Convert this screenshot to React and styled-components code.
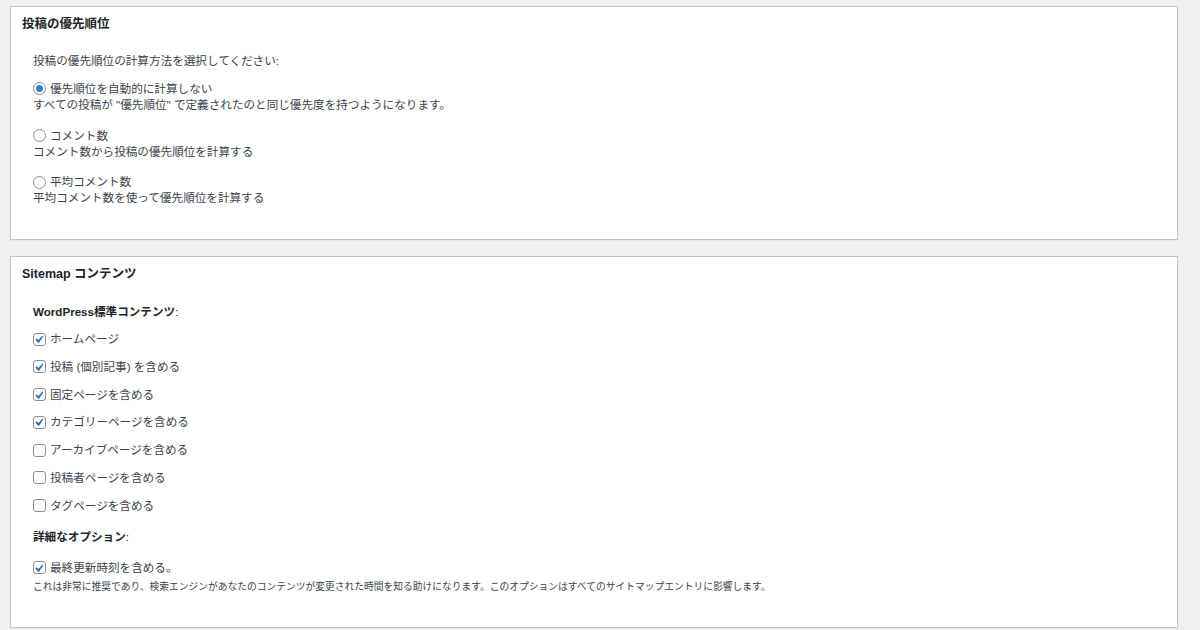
import React from "react";
import styled, { createGlobalStyle } from "styled-components";

const GlobalStyle = createGlobalStyle`
  html, body { margin: 0; padding: 0; background: #f0f0f1; }
  body {
    font-family: "Liberation Sans", "Noto Sans CJK JP", sans-serif;
    color: #3c434a;
  }
`;

const Page = styled.div`
  box-sizing: border-box;
  height: 630px;
  overflow: hidden;
  padding: 6px 22px 0 10px;
  display: flex;
  flex-direction: column;
  gap: 16px;
`;

const Panel = styled.section`
  background: #fff;
  border: 1px solid #c3c4c7;
  box-shadow: 0 1px 1px rgba(0, 0, 0, 0.04);
  padding-bottom: 33px;
  flex-shrink: 0;
`;

const PanelTitle = styled.h2`
  margin: 0;
  padding: 7px 11px 5px;
  height: 20px;
  font-size: 12.5px;
  line-height: 20px;
  font-weight: 700;
  color: #1d2327;
`;

const Body = styled.div`
  padding: ${(p) => p.$top}px 11px 0 22px;
  display: flex;
  flex-direction: column;
`;

const Text = styled.p`
  margin: ${(p) => p.$mt || 0}px 0 0;
  height: 17px;
  font-size: 11.6px;
  line-height: 17px;
`;

const Heading = styled.p`
  margin: ${(p) => p.$mt || 0}px 0 0;
  height: 17px;
  font-size: 11.6px;
  line-height: 17px;
  color: #1d2327;
  strong { font-weight: 700; }
`;

const Option = styled.div`
  margin-top: ${(p) => p.$mt}px;
  display: flex;
  flex-direction: column;
`;

const Row = styled.label`
  display: flex;
  align-items: center;
  gap: 4px;
  height: 16px;
  margin-top: ${(p) => p.$mt || 0}px;
  font-size: 11.6px;
  line-height: 16px;
`;

const Desc = styled.div`
  height: 16px;
  font-size: 11.6px;
  line-height: 16px;
`;

const Small = styled.p`
  margin: 4px 0 0;
  height: 14px;
  font-size: 9.75px;
  line-height: 14px;
`;

const RadioCircle = styled.span`
  box-sizing: border-box;
  width: 13px;
  height: 13px;
  border-radius: 50%;
  border: 1px solid #8c8f94;
  display: inline-flex;
  align-items: center;
  justify-content: center;
  flex-shrink: 0;
  background: #fff;
  &::after {
    content: "";
    width: 7px;
    height: 7px;
    border-radius: 50%;
    background: ${(p) => (p.$checked ? "#3582c4" : "transparent")};
  }
`;

const CheckBoxSquare = styled.span`
  box-sizing: border-box;
  width: 13px;
  height: 13px;
  border-radius: 3px;
  border: 1px solid #8c8f94;
  background: #fff;
  display: inline-flex;
  align-items: center;
  justify-content: center;
  flex-shrink: 0;
  overflow: visible;
  svg { display: block; }
`;

const Radio = ({ checked, children, mt }) => (
  <Row $mt={mt}>
    <RadioCircle $checked={checked} />
    <span>{children}</span>
  </Row>
);

const Check = ({ checked, children, mt }) => (
  <Row $mt={mt}>
    <CheckBoxSquare>
      {checked && (
        <svg width="16" height="16" viewBox="4 2.5 14 14">
          <path
            d="M14.83 4.89l1.34.94-5.81 8.38H9.02L5.78 9.67l1.34-1.25 2.57 2.4z"
            fill="#2271b1"
          />
        </svg>
      )}
    </CheckBoxSquare>
    <span>{children}</span>
  </Row>
);

const contents = [
  ["ホームページ", true],
  ["投稿 (個別記事) を含める", true],
  ["固定ページを含める", true],
  ["カテゴリーページを含める", true],
  ["アーカイブページを含める", false],
  ["投稿者ページを含める", false],
  ["タグページを含める", false],
];

export default function App() {
  return (
    <>
      <GlobalStyle />
      <Page>
        <Panel>
          <PanelTitle>投稿の優先順位</PanelTitle>
          <Body $top={13}>
            <Text>投稿の優先順位の計算方法を選択してください:</Text>
            <Option $mt={11.5}>
              <Radio checked>優先順位を自動的に計算しない</Radio>
              <Desc>すべての投稿が "優先順位" で定義されたのと同じ優先度を持つようになります。</Desc>
            </Option>
            <Option $mt={15}>
              <Radio>コメント数</Radio>
              <Desc>コメント数から投稿の優先順位を計算する</Desc>
            </Option>
            <Option $mt={14.5}>
              <Radio>平均コメント数</Radio>
              <Desc>平均コメント数を使って優先順位を計算する</Desc>
            </Option>
          </Body>
        </Panel>
        <Panel>
          <PanelTitle>Sitemap コンテンツ</PanelTitle>
          <Body $top={14}>
            <Heading>
              <strong>WordPress標準コンテンツ</strong>:
            </Heading>
            {contents.map(([label, checked], i) => (
              <Check key={label} checked={checked} mt={i === 0 ? 11 : 11.8}>
                {label}
              </Check>
            ))}
            <Heading $mt={14.5}>
              <strong>詳細なオプション</strong>:
            </Heading>
            <Check checked mt={14.5}>最終更新時刻を含める。</Check>
            <Small>
              これは非常に推奨であり、検索エンジンがあなたのコンテンツが変更された時間を知る助けになります。このオプションはすべてのサイトマップエントリに影響します。
            </Small>
          </Body>
        </Panel>
      </Page>
    </>
  );
}
